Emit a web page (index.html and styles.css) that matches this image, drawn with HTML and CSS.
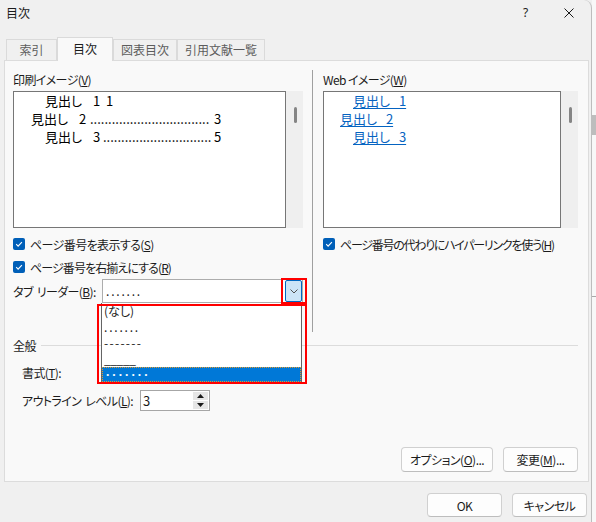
FILE: index.html
```html
<!DOCTYPE html>
<html lang="ja">
<head>
<meta charset="utf-8">
<title>目次</title>
<link rel="stylesheet" href="styles.css">
</head>
<body>
<div class="dialog">
  <div class="titlebar">
    <span class="title">目次</span>
    <span class="tb-help">?</span>
    <span class="tb-close"><svg width="10" height="10" viewBox="0 0 10 10"><path d="M0.5 0.5L9.5 9.5M9.5 0.5L0.5 9.5" stroke="#1a1a1a" stroke-width="1" fill="none"/></svg></span>
  </div>
  <div class="tabs">
    <div class="tab t1">索引</div>
    <div class="tab active t2">目次</div>
    <div class="tab t3">図表目次</div>
    <div class="tab t4">引用文献一覧</div>
  </div>
  <div class="panel">
    <div class="top">
      <div class="col left">
        <div class="label">印刷イメージ(<u>V</u>)</div>
        <div class="preview">
          <div class="pbox print">
            <div class="pl ind2"><span class="h">見出し</span><span class="num n1">1</span><span class="num n1b">1</span></div>
            <div class="pl ind1"><span class="h">見出し</span><span class="num n2">2</span><span class="dots d2">.................................</span><span class="num pg">3</span></div>
            <div class="pl ind2"><span class="h">見出し</span><span class="num n3">3</span><span class="dots d3">..............................</span><span class="num pg">5</span></div>
          </div>
          <div class="sbar"><div class="thumb"></div></div>
        </div>
        <div class="chk"><svg class="cb" width="12" height="12" viewBox="0 0 12 12"><rect width="12" height="12" rx="2" fill="#005fb8"/><path d="M3.2 6.2L5.1 8.1L8.9 4.1" stroke="#fff" stroke-width="1.1" fill="none"/></svg><span>ページ番号を表示する(<u>S</u>)</span></div>
        <div class="chk c2"><svg class="cb" width="12" height="12" viewBox="0 0 12 12"><rect width="12" height="12" rx="2" fill="#005fb8"/><path d="M3.2 6.2L5.1 8.1L8.9 4.1" stroke="#fff" stroke-width="1.1" fill="none"/></svg><span class="tight">ページ番号を右揃えにする(<u>R</u>)</span></div>
        <div class="leader-row">
          <span class="llbl">タブ<span class="gap"> </span>リーダー(<u>B</u>):</span>
          <div class="combo">
            <span class="ctext">.......</span>
            <span class="cbtn"><svg width="8" height="5" viewBox="0 0 8 5"><path d="M0.5 0.5L4 4L7.5 0.5" stroke="#505050" stroke-width="1" fill="none"/></svg></span>
            <div class="list">
              <div class="item">(なし)</div>
              <div class="item dotted">.......</div>
              <div class="item dashed">-------</div>
              <div class="item under">_____</div>
              <div class="item sel"><span>·······</span></div>
            </div>
            <div class="red red-btn"></div>
            <div class="red red-list"></div>
          </div>
        </div>
      </div>
      <div class="divider"></div>
      <div class="col right">
        <div class="label">Web イメージ(<u>W</u>)</div>
        <div class="preview">
          <div class="pbox web">
            <div class="wl ind2"><a>見出し 1</a></div>
            <div class="wl ind1"><a>見出し 2</a></div>
            <div class="wl ind2"><a>見出し 3</a></div>
          </div>
          <div class="sbar"><div class="thumb"></div></div>
        </div>
        <div class="chk"><svg class="cb" width="12" height="12" viewBox="0 0 12 12"><rect width="12" height="12" rx="2" fill="#005fb8"/><path d="M3.2 6.2L5.1 8.1L8.9 4.1" stroke="#fff" stroke-width="1.1" fill="none"/></svg><span class="tighter">ページ番号の代わりにハイパーリンクを使う(<u>H</u>)</span></div>
      </div>
    </div>
    <div class="group"><span>全般</span><span class="gline"></span></div>
    <div class="row fmt">書式(<u>T</u>):</div>
    <div class="row lvl">
      <span class="lvl-lbl">アウトライン<span class="gap"> </span>レベル(<u>L</u>):</span>
      <div class="spin">
        <span class="spin-val">3</span>
        <div class="spin-btns">
          <span class="sb up"><svg width="7" height="4" viewBox="0 0 7 4"><path d="M0 4L3.5 0L7 4Z" fill="#1a1a1a"/></svg></span>
          <span class="sb down"><svg width="7" height="4" viewBox="0 0 7 4"><path d="M0 0L3.5 4L7 0Z" fill="#1a1a1a"/></svg></span>
        </div>
      </div>
    </div>
    <div class="pbtns">
      <button class="btn b-opt">オプション(<u>O</u>)...</button>
      <button class="btn b-chg">変更(<u>M</u>)...</button>
    </div>
  </div>
  <div class="footer">
    <button class="btn b-ok">OK</button>
    <button class="btn b-cancel">キャンセル</button>
  </div>
</div>
<div class="strip">
  <div class="bg-block"></div>
  <div class="bg-line"></div>
</div>
</body>
</html>
```
FILE: styles.css
```css
html, body {
  margin: 0;
  padding: 0;
}
body {
  width: 596px;
  height: 522px;
  overflow: hidden;
  display: flex;
  background: #f0f0f0;
  font-family: "Noto Sans CJK JP", "Noto Sans", sans-serif;
  font-size: 12px;
  letter-spacing: -0.6px;
  color: #1b1b1b;
  font-feature-settings: "palt" 1;
}
u { text-decoration: underline; text-underline-offset: 1px; }
.gap { display: inline-block; width: 4px; }
.tight { letter-spacing: -0.9px; }
.tighter { letter-spacing: -1.25px; }

.dialog {
  width: 592px;
  height: 522px;
  box-sizing: border-box;
  border-right: 1px solid #bdbdbd;
  border-top-right-radius: 8px;
  display: flex;
  flex-direction: column;
  background: #f0f0f0;
}
.titlebar {
  height: 26px;
  display: flex;
  align-items: center;
  line-height: 16px;
  letter-spacing: 0;
}
.title { padding-left: 6px; }
.tb-help { margin-left: auto; width: 43px; text-align: center; font-family: "Noto Sans", sans-serif; }
.tb-close { width: 44px; display: flex; justify-content: center; align-items: center; }

.tabs {
  margin-top: 11px;
  height: 23px;
  padding-left: 6px;
  display: flex;
  align-items: flex-end;
  letter-spacing: 0;
}
.tab {
  height: 21px;
  box-sizing: border-box;
  border: 1px solid #dadada;
  border-bottom: none;
  background: #f0f0f0;
  color: #5c5c5c;
  text-align: center;
  line-height: 20px;
}
.tab.active {
  height: 24px;
  margin-bottom: -1px;
  background: #f9f9f9;
  color: #1b1b1b;
  position: relative;
  z-index: 1;
  line-height: 22px;
}
.t1 { width: 51px; }
.t2 { width: 56px; }
.t3 { width: 64px; }
.t4 { width: 88px; }

.panel {
  margin-left: 4px;
  width: 585px;
  height: 422px;
  box-sizing: border-box;
  border: 1px solid #dcdcdc;
  background: #f9f9f9;
  padding: 9px 0 9px 8px;
  display: flex;
  flex-direction: column;
}
.top {
  height: 262px;
  display: flex;
}
.col.left { width: 290px; }
.col.right { width: 255px; }
.divider {
  width: 1px;
  background: #a0a0a0;
  margin: 0 10px 0 9px;
}
.label {
  height: 21px;
  line-height: 20px;
}
.preview {
  display: flex;
  height: 137px;
}
.pbox {
  box-sizing: border-box;
  height: 137px;
  border: 1px solid #767676;
  background: #fff;
  font-size: 13px;
  line-height: 18px;
  color: #000;
  letter-spacing: 0;
}
.pbox.print { width: 273px; }
.pbox.web { width: 238px; }
.sbar {
  width: 17px;
  background: #efefef;
}
.thumb {
  margin: 16px 0 0 8px;
  width: 3px;
  height: 16px;
  border-radius: 1.5px;
  background: #858585;
}
.pl {
  display: flex;
  white-space: nowrap;
  height: 18px;
}
.ind1 { padding-left: 17px; }
.ind2 { padding-left: 31px; }
.web .ind1 { padding-left: 16px; }
.web .ind2 { padding-left: 29px; }
.h { width: 39px; }
.num { width: 7px; text-align: center; }
.n1, .n2, .n3 { margin-left: 9px; }
.n1b { margin-left: 6px; }
.dots {
  letter-spacing: 0;
}
.d2 { margin-left: 4px; width: 119px; }
.d3 { margin-left: 3px; width: 106px; }
.pg { margin-left: 5px; }

.wl { height: 18px; white-space: nowrap; }
.wl a {
  color: #0563c1;
  text-decoration: underline;
  text-underline-offset: 2px;
  word-spacing: 6px;
}

.chk {
  display: flex;
  align-items: center;
  height: 22px;
  margin-top: 5px;
  gap: 5px;
  white-space: nowrap;
}
.chk.c2 { margin-top: 1px; }
.cb { flex: none; }

.leader-row {
  margin-top: 1px;
  height: 24px;
  display: flex;
  align-items: center;
}
.llbl { width: 89px; white-space: nowrap; }
.combo {
  position: relative;
  width: 201px;
  height: 24px;
  box-sizing: border-box;
  border: 1px solid #adadad;
  background: #fff;
  display: flex;
  letter-spacing: 0;
}
.ctext {
  flex: 1;
  padding-left: 3px;
  line-height: 21px;
  letter-spacing: 1.8px;
}
.cbtn {
  width: 17px;
  height: 22px;
  box-sizing: border-box;
  border: 1px solid #0067c0;
  border-radius: 2px;
  background: #cce4f7;
  display: flex;
  align-items: center;
  justify-content: center;
}
.list {
  position: absolute;
  left: -2px;
  top: 23px;
  width: 201px;
  height: 80px;
  box-sizing: border-box;
  border: 1px solid #646464;
  border-top: none;
  background: #fff;
  overflow: hidden;
}
.item {
  height: 16px;
  line-height: 16px;
  padding-left: 2px;
  white-space: nowrap;
}
.item.dotted { letter-spacing: 1.8px; }
.item.dashed { letter-spacing: 1.3px; }
.item.under { letter-spacing: -0.4px; }
.item.sel {
  height: 15px;
  background: #0078d7;
  box-sizing: border-box;
  border: 1px dotted #e59a2a;
  color: #fff;
  line-height: 13px;
  padding-left: 3px;
  font-family: "Noto Sans", sans-serif;
  font-weight: bold;
  letter-spacing: 3px;
}
.red {
  position: absolute;
  box-sizing: border-box;
  border: 2px solid #ff0000;
}
.red-btn { left: 178px; top: -2px; width: 26px; height: 26px; }
.red-list { left: -6px; top: 24px; width: 210px; height: 80px; }

.group {
  height: 26px;
  display: flex;
  align-items: center;
}
.gline {
  flex: 1;
  height: 1px;
  background: #dcdcdc;
  margin: 0 10px 0 5px;
}
.row { padding-left: 9px; }
.fmt {
  height: 30px;
  line-height: 30px;
}
.lvl {
  margin-top: 1px;
  height: 23px;
  display: flex;
  align-items: center;
}
.lvl-lbl { width: 118px; white-space: nowrap; }
.spin {
  width: 70px;
  height: 21px;
  box-sizing: border-box;
  border: 1px solid #a6a6a6;
  background: #fff;
  display: flex;
}
.spin-val {
  flex: 1;
  padding-left: 2px;
  font-size: 13px;
  line-height: 19px;
  letter-spacing: 0;
}
.spin-btns {
  width: 15px;
  margin: 1px 1px 0 0;
  display: flex;
  flex-direction: column;
}
.sb {
  height: 8px;
  background: #e6e6e6;
  display: flex;
  align-items: center;
  justify-content: center;
}
.sb.down { margin-top: 1px; }

.btn {
  font-family: "Noto Sans CJK JP", "Noto Sans", sans-serif;
  font-feature-settings: "palt" 1;
  font-size: 12px;
  letter-spacing: -0.5px;
  color: #1b1b1b;
  background: #fdfdfd;
  border: 1px solid #d0d0d0;
  border-bottom-color: #bdbdbd;
  border-radius: 4px;
  padding: 0;
  height: 25px;
  box-sizing: border-box;
}
.pbtns {
  margin-top: auto;
  display: flex;
  justify-content: flex-end;
  gap: 10px;
  padding-right: 10px;
}
.b-opt { width: 92px; }
.b-chg { width: 75px; }
.footer {
  margin-top: 11px;
  display: flex;
  justify-content: flex-end;
  gap: 10px;
  padding-right: 4px;
}
.b-ok, .b-cancel { width: 75px; height: 24px; }

.strip {
  flex: 1;
  background: #f8f8f8;
  display: flex;
  flex-direction: column;
}
.bg-block {
  margin-top: 115px;
  height: 20px;
  background: #bdbdbd;
}
.bg-line {
  margin-top: 161px;
  height: 1px;
  background: #a8a8a8;
}
```
